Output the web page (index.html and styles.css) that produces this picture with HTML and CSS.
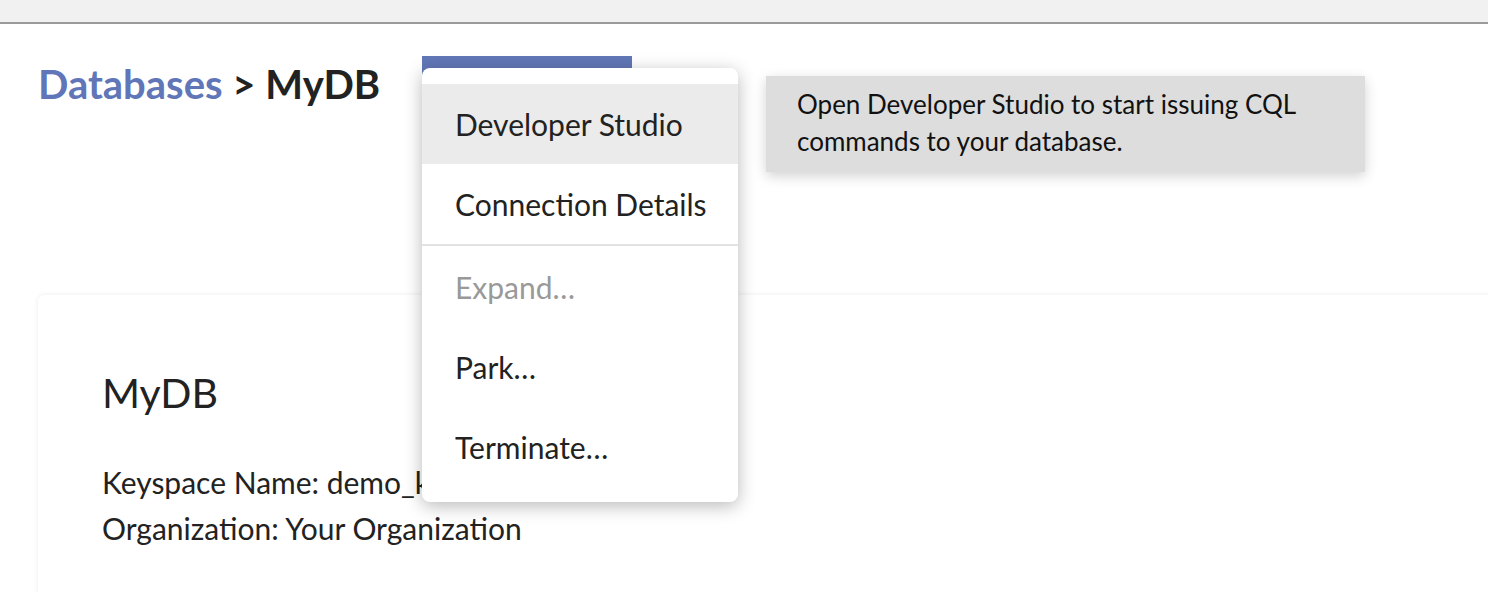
FILE: index.html
```html
<!DOCTYPE html>
<html lang="en">
<head>
<meta charset="utf-8">
<title>MyDB</title>
<link rel="stylesheet" href="styles.css">
</head>
<body>
<div class="topbar"></div>
<main class="page">
  <header class="header">
    <h1 class="crumbs"><a class="crumb-link" href="#">Databases</a> &gt; MyDB</h1>
    <div class="actions">
      <button class="action-btn" type="button">Actions</button>
      <ul class="menu">
        <li class="menu-item is-active">Developer Studio</li>
        <li class="menu-item">Connection Details</li>
        <li class="menu-sep"></li>
        <li class="menu-item is-disabled">Expand…</li>
        <li class="menu-item">Park…</li>
        <li class="menu-item">Terminate…</li>
      </ul>
      <div class="tooltip">Open Developer Studio to start issuing CQL commands to your database.</div>
    </div>
  </header>
  <section class="card">
    <h2 class="card-title">MyDB</h2>
    <p class="card-line">Keyspace Name: demo_keyspace</p>
    <p class="card-line">Organization: Your Organization</p>
  </section>
</main>
</body>
</html>
```
FILE: styles.css
```css
html, body {
  margin: 0;
  padding: 0;
  background: #ffffff;
  overflow: hidden;
  height: 592px;
}
body {
  font-family: "Lato", "Liberation Sans", sans-serif;
  color: #222222;
}
.topbar {
  height: 22px;
  background: #f1f1f1;
  border-bottom: 2px solid #9a9a9a;
}
.page {
  padding: 0 0 0 38px;
}
.header {
  display: flex;
  align-items: flex-start;
  height: 271px;
}
.crumbs {
  margin: 36px 0 0 0;
  font-size: 40px;
  line-height: 48px;
  font-weight: 700;
  color: #222222;
  width: 384px;
  flex: none;
}
.crumb-link {
  color: #6176b8;
  text-decoration: none;
}
.actions {
  position: relative;
  margin-top: 32px;
}
.action-btn {
  width: 210px;
  height: 48px;
  background: #6177b7;
  border: none;
  color: #ffffff;
  font: inherit;
  font-size: 24px;
}
.menu {
  position: absolute;
  left: 0;
  top: 12px;
  width: 316px;
  margin: 0;
  padding: 16px 0 15px 0;
  list-style: none;
  background: #ffffff;
  border-radius: 8px;
  box-shadow: 0 4px 18px rgba(0, 0, 0, 0.28);
}
.menu-item {
  height: 80px;
  display: flex;
  align-items: center;
  padding: 0 0 0 33px;
  font-size: 30px;
  color: #222222;
}
.menu-item.is-active {
  background: #ebebeb;
}
.menu-item.is-disabled {
  color: #999999;
}
.menu-sep {
  height: 2px;
  margin: 0 0 1px 0;
  background: #e2e2e2;
}
.tooltip {
  position: absolute;
  left: 344px;
  top: 20px;
  width: 538px;
  padding: 10px 30px 12px 31px;
  background: #dddddd;
  box-shadow: 0 4px 12px rgba(0, 0, 0, 0.18);
  font-size: 26px;
  line-height: 37px;
  color: #111111;
}
.card {
  width: 1500px;
  height: 400px;
  box-sizing: border-box;
  padding: 72px 64px;
  background: #ffffff;
  border-radius: 6px;
  box-shadow: 0 0 5px rgba(0, 0, 0, 0.08);
}
.card-title {
  margin: 0 0 40px 0;
  font-size: 41px;
  line-height: 52px;
  font-weight: 400;
}
.card-line {
  margin: 0;
  font-size: 30px;
  line-height: 46px;
}
```
